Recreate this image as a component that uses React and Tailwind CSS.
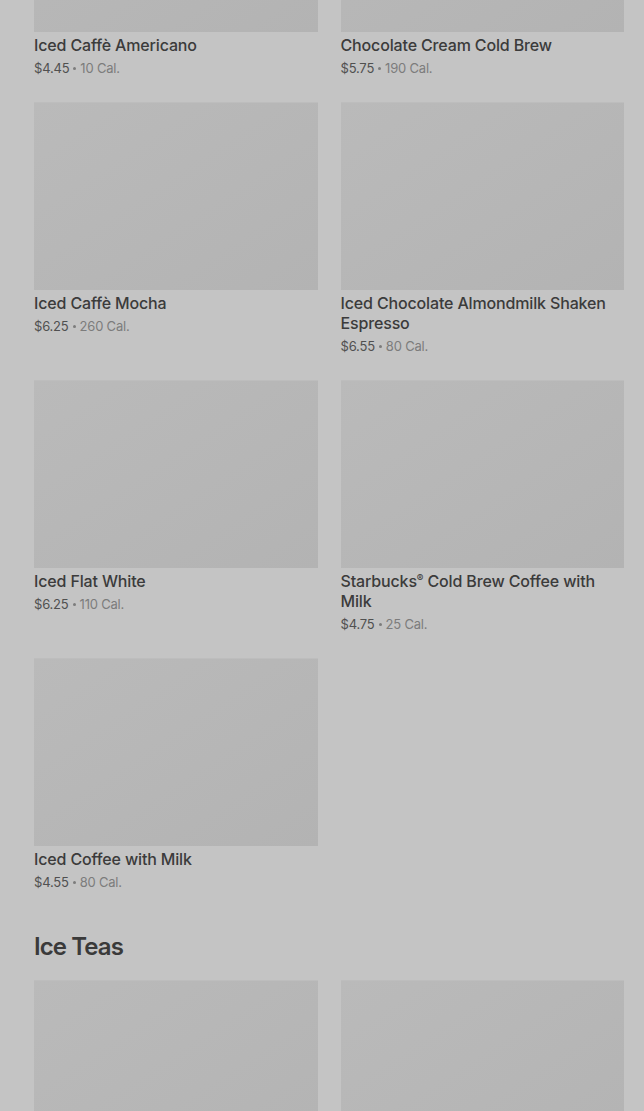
import React from "react";

const coffee = [
  { name: "Iced Caffè Americano", price: "$4.45", cal: "10 Cal." },
  { name: "Chocolate Cream Cold Brew", price: "$5.75", cal: "190 Cal." },
  { name: "Iced Caffè Mocha", price: "$6.25", cal: "260 Cal." },
  { name: "Iced Chocolate Almondmilk Shaken Espresso", price: "$6.55", cal: "80 Cal." },
  { name: "Iced Flat White", price: "$6.25", cal: "110 Cal." },
  { name: "Starbucks® Cold Brew Coffee with Milk", price: "$4.75", cal: "25 Cal." },
  { name: "Iced Coffee with Milk", price: "$4.55", cal: "80 Cal." },
];

function Card({ item }) {
  return (
    <div className="flex flex-col">
      <div className="h-[188px] bg-gradient-to-br from-[#bababa] to-[#b3b3b3] border-t border-[#bdbdbd]" />
      {item && (
        <>
          <div className="mt-[3px] text-[16px] leading-[20px] font-medium text-[#3b3b3b] tracking-[-0.15px] pr-2">
            {item.name.includes("®") ? (
              <>
                Starbucks<span className="text-[10px] leading-[10px] inline-block align-top mt-[2px]">®</span> Cold Brew Coffee with Milk
              </>
            ) : (
              item.name
            )}
          </div>
          <div className="mt-[3px] h-[20px] flex items-center text-[13px] leading-[20px] text-[#505050] tracking-[-0.2px]">
            <span>{item.price}</span>
            <span className="mx-[4px] w-[3px] h-[3px] rounded-full bg-[#7c7c7c]" />
            <span className="text-[#7c7c7c]">{item.cal}</span>
          </div>
        </>
      )}
    </div>
  );
}

export default function App() {
  return (
    <div
      className="min-h-[1111px] bg-[#c4c4c4] overflow-hidden"
      style={{ fontFamily: "Inter, 'Noto Sans', sans-serif" }}
    >
      <div className="-mt-[156px] pl-[34px] pr-[20px]">
        <div className="grid grid-cols-2 gap-x-[23px] gap-y-[24px]">
          {coffee.map((c) => (
            <Card key={c.name} item={c} />
          ))}
        </div>
        <h2 className="mt-[39px] text-[24px] leading-[32px] font-semibold text-[#3a3a3a] tracking-[-0.9px]">
          Ice Teas
        </h2>
        <div className="mt-[17px] grid grid-cols-2 gap-x-[23px]">
          <Card />
          <Card />
        </div>
      </div>
    </div>
  );
}
